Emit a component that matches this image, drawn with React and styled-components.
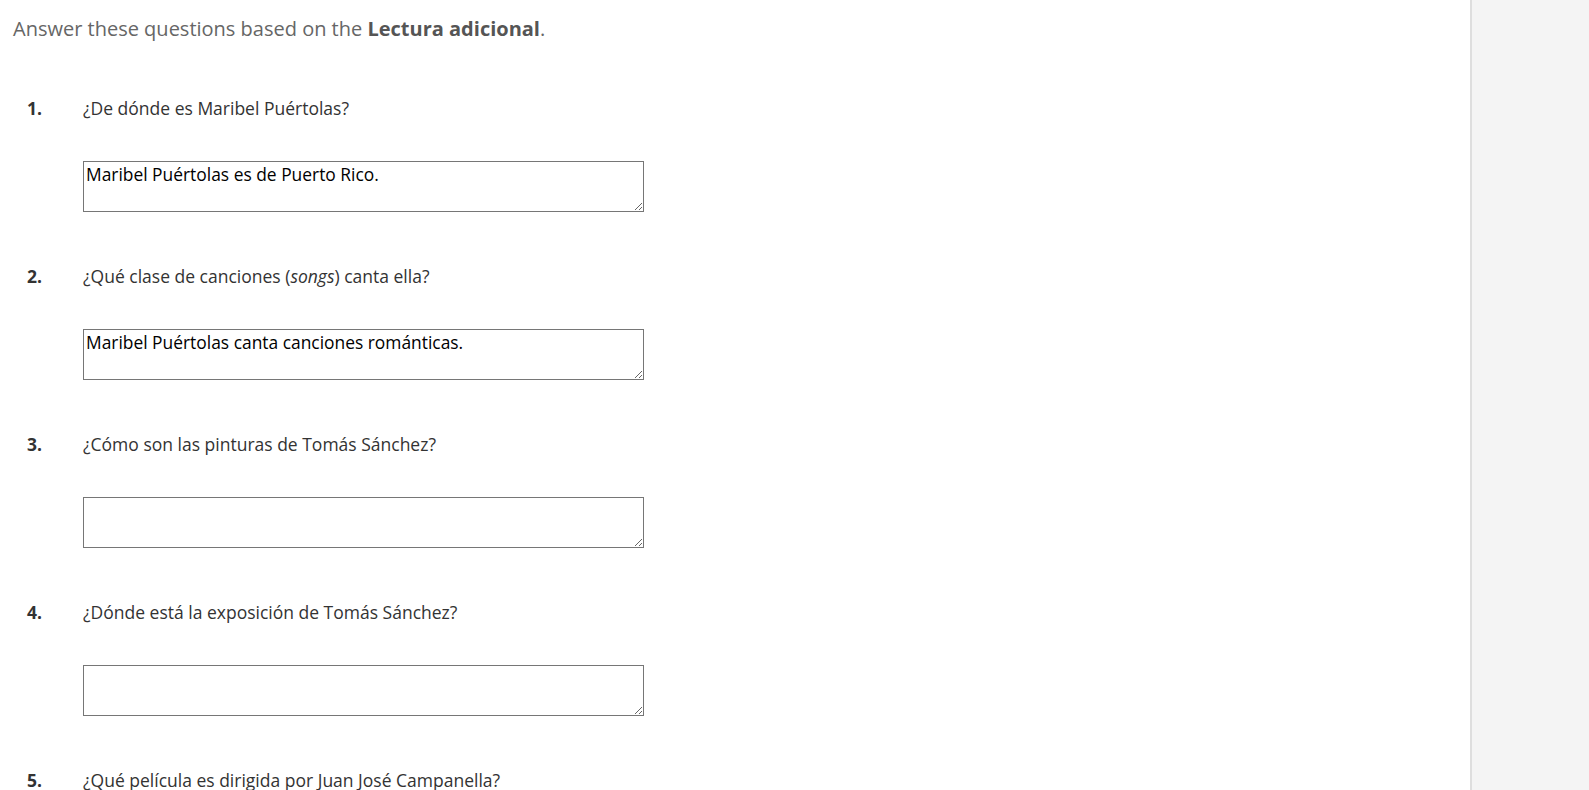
import React from "react";
import styled, { createGlobalStyle } from "styled-components";

const Global = createGlobalStyle`
  html, body {
    margin: 0;
    padding: 0;
    height: 100%;
    overflow: hidden;
    background: #ffffff;
  }
  #root { height: 100%; }
  * { box-sizing: border-box; }
`;

const Page = styled.div`
  display: flex;
  height: 100vh;
  font-family: "Open Sans", "Liberation Sans", sans-serif;
`;

const Main = styled.main`
  flex: 1;
  padding: 15px 0 0 13px;
  overflow: hidden;
`;

const Side = styled.aside`
  width: 119px;
  flex-shrink: 0;
  background: #f4f4f4;
  border-left: 2px solid #dedede;
`;

const Intro = styled.p`
  margin: 0;
  font-size: 20px;
  line-height: 27px;
  color: #666666;
  strong { color: #555555; font-weight: 700; }
`;

const List = styled.ol`
  list-style: none;
  margin: 54px 0 0;
  padding: 0;
`;

const Item = styled.li`
  margin-bottom: 52px;
`;

const QuestionRow = styled.div`
  display: grid;
  grid-template-columns: 14px 56px 1fr;
  font-size: 17.5px;
  line-height: 24px;
  color: #333333;
`;

const Num = styled.span`
  grid-column: 2;
  font-weight: 700;
  color: #333333;
`;

const Prompt = styled.span`
  grid-column: 3;
  em { font-style: italic; }
`;

const Answer = styled.textarea`
  display: block;
  margin: 41px 0 0 70px;
  width: 561px;
  height: 51px;
  padding: 0 2px;
  border: 1px solid #767676;
  border-radius: 0;
  font-family: "Open Sans", "Liberation Sans", sans-serif;
  font-size: 17.4px;
  line-height: 24px;
  color: #000;
  background: #fff;
  resize: vertical;
`;

const questions = [
  { q: <>¿De dónde es Maribel Puértolas?</>, a: "Maribel Puértolas es de Puerto Rico." },
  { q: <>¿Qué clase de canciones (<em>songs</em>) canta ella?</>, a: "Maribel Puértolas canta canciones románticas." },
  { q: <>¿Cómo son las pinturas de Tomás Sánchez?</>, a: "" },
  { q: <>¿Dónde está la exposición de Tomás Sánchez?</>, a: "" },
  { q: <>¿Qué película es dirigida por Juan José Campanella?</>, a: "" },
];

export default function App() {
  return (
    <>
      <Global />
      <Page>
        <Main>
          <Intro>
            Answer these questions based on the <strong>Lectura adicional</strong>.
          </Intro>
          <List>
            {questions.map((item, i) => (
              <Item key={i}>
                <QuestionRow>
                  <Num>{i + 1}.</Num>
                  <Prompt>{item.q}</Prompt>
                </QuestionRow>
                <Answer defaultValue={item.a} />
              </Item>
            ))}
          </List>
        </Main>
        <Side />
      </Page>
    </>
  );
}
